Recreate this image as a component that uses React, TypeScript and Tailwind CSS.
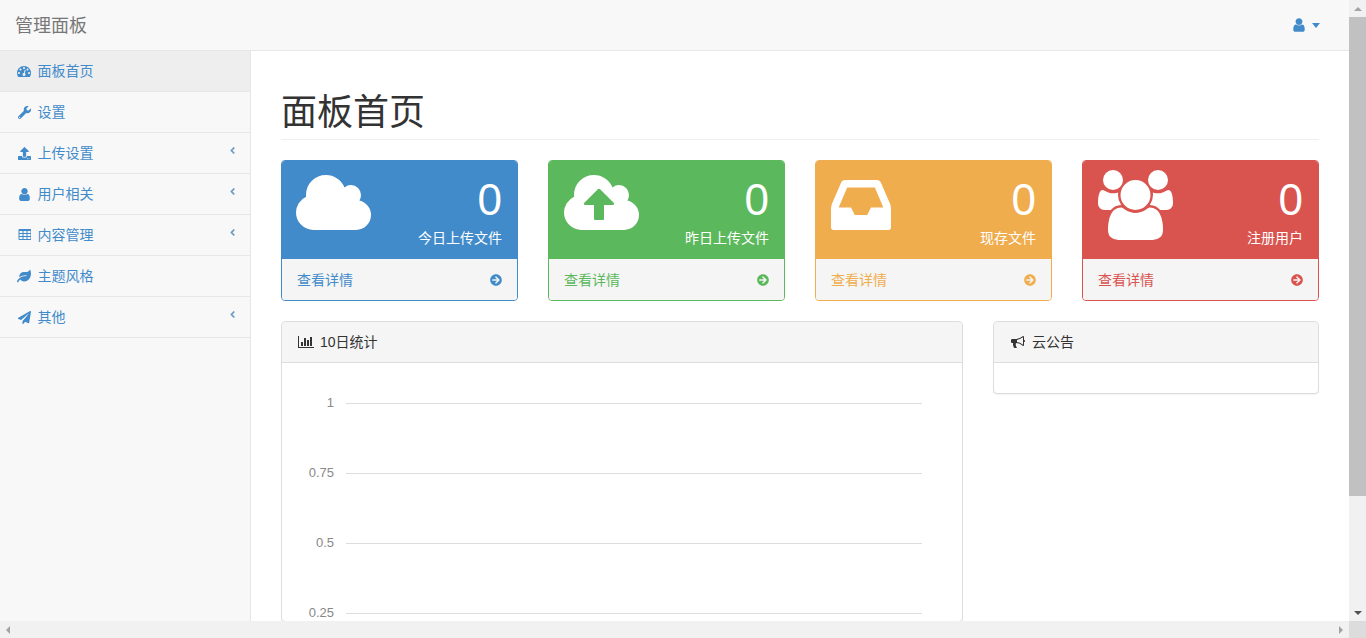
import type { ReactNode } from "react";
import { FaAngleLeft, FaArrowCircleRight, FaLeaf, FaPaperPlane, FaUpload, FaWrench } from "react-icons/fa";

const CLOUD =
  "M1920 1152q0 159-112.5 271.5t-271.5 112.5h-1088q-185 0-316.5-131.5t-131.5-316.5q0-130 70-240t188-165q-2-30-2-43 0-212 150-362t362-150q156 0 285.5 87t188.5 231q71-62 166-62 106 0 181 75t75 181q0 76-41 138 130 31 213.5 135.5t83.5 238.5z";
const CLOUD_UPLOAD =
  "M1280 864q0-14-9-23l-352-352q-9-9-23-9t-23 9l-351 351q-10 12-10 24 0 14 9 23t23 9h224v352q0 13 9.5 22.5t22.5 9.5h192q13 0 22.5-9.5t9.5-22.5v-352h224q13 0 22.5-9.5t9.5-22.5zm640 288q0 159-112.5 271.5t-271.5 112.5h-1088q-185 0-316.5-131.5t-131.5-316.5q0-130 70-240t188-165q-2-30-2-43 0-212 150-362t362-150q156 0 285.5 87t188.5 231q71-62 166-62 106 0 181 75t75 181q0 76-41 138 130 31 213.5 135.5t83.5 238.5z";
const INBOX =
  "M1023 960h316q-1-3-2.5-8t-2.5-8l-212-496h-708l-212 496q-1 2-2.5 8t-2.5 8h316l95 192h320zm513 30v482q0 26-19 45t-45 19h-1408q-26 0-45-19t-19-45v-482q0-62 25-123l238-552q10-25 36.5-42t52.5-17h832q26 0 52.5 17t36.5 42l238 552q25 61 25 123z";
const USERS =
  "M593 896q-162 5-265 128h-134q-82 0-138-40.5t-56-118.5q0-353 124-353 6 0 43.5 21t97.5 42.5 119 21.5q67 0 133-23-5 37-5 66 0 139 81 256zm1071 637q0 120-73 189.5t-194 69.5h-874q-121 0-194-69.5t-73-189.5q0-53 3.5-103.5t14-109 26.5-108.5 43-97.5 62-81 85.5-53.5 111.5-20q10 0 43 21.5t73 48 107 48 135 21.5 135-21.5 107-48 73-48 43-21.5q61 0 111.5 20t85.5 53.5 62 81 43 97.5 26.5 108.5 14 109 3.5 103.5zm-1024-1277q0 106-75 181t-181 75-181-75-75-181 75-181 181-75 181 75 75 181zm704 384q0 159-112.5 271.5t-271.5 112.5-271.5-112.5-112.5-271.5 112.5-271.5 271.5-112.5 271.5 112.5 112.5 271.5zm576 225q0 78-56 118.5t-138 40.5h-134q-103-123-265-128 81-117 81-256 0-29-5-66 66 23 133 23 59 0 119-21.5t97.5-42.5 43.5-21q124 0 124 353zm-128-609q0 106-75 181t-181 75-181-75-75-181 75-181 181-75 181 75 75 181z";
const DASHBOARD =
  "M384 1152q0-53-37.5-90.5t-90.5-37.5-90.5 37.5-37.5 90.5 37.5 90.5 90.5 37.5 90.5-37.5 37.5-90.5zm192-448q0-53-37.5-90.5t-90.5-37.5-90.5 37.5-37.5 90.5 37.5 90.5 90.5 37.5 90.5-37.5 37.5-90.5zm428 481l101-382q6-26-7.5-48.5t-38.5-29.5-48 6.5-30 39.5l-101 382q-60 5-107 43.5t-63 98.5q-20 77 20 146t117 89 146-20 89-117q16-60-6-117t-72-91zm660-33q0-53-37.5-90.5t-90.5-37.5-90.5 37.5-37.5 90.5 37.5 90.5 90.5 37.5 90.5-37.5 37.5-90.5zm-640-640q0-53-37.5-90.5t-90.5-37.5-90.5 37.5-37.5 90.5 37.5 90.5 90.5 37.5 90.5-37.5 37.5-90.5zm448 192q0-53-37.5-90.5t-90.5-37.5-90.5 37.5-37.5 90.5 37.5 90.5 90.5 37.5 90.5-37.5 37.5-90.5zm320 448q0 261-141 483-19 29-54 29h-1402q-35 0-54-29-141-221-141-483 0-182 71-348t191-286 286-191 348-71 348 71 286 191 191 286 71 348z";
const USER =
  "M1536 1399q0 109-62.5 187t-150.5 78h-854q-88 0-150.5-78t-62.5-187q0-85 8.5-160.5t31.5-152 58.5-131 94-89 134.5-34.5q131 128 313 128t313-128q76 0 134.5 34.5t94 89 58.5 131 31.5 152 8.5 160.5zm-256-887q0 159-112.5 271.5t-271.5 112.5-271.5-112.5-112.5-271.5 112.5-271.5 271.5-112.5 271.5 112.5 112.5 271.5z";
const TABLE =
  "M576 1376v-192q0-14-9-23t-23-9h-320q-14 0-23 9t-9 23v192q0 14 9 23t23 9h320q14 0 23-9t9-23zm0-384v-192q0-14-9-23t-23-9h-320q-14 0-23 9t-9 23v192q0 14 9 23t23 9h320q14 0 23-9t9-23zm512 384v-192q0-14-9-23t-23-9h-320q-14 0-23 9t-9 23v192q0 14 9 23t23 9h320q14 0 23-9t9-23zm-512-768v-192q0-14-9-23t-23-9h-320q-14 0-23 9t-9 23v192q0 14 9 23t23 9h320q14 0 23-9t9-23zm512 384v-192q0-14-9-23t-23-9h-320q-14 0-23 9t-9 23v192q0 14 9 23t23 9h320q14 0 23-9t9-23zm512 384v-192q0-14-9-23t-23-9h-320q-14 0-23 9t-9 23v192q0 14 9 23t23 9h320q14 0 23-9t9-23zm-512-768v-192q0-14-9-23t-23-9h-320q-14 0-23 9t-9 23v192q0 14 9 23t23 9h320q14 0 23-9t9-23zm512 384v-192q0-14-9-23t-23-9h-320q-14 0-23 9t-9 23v192q0 14 9 23t23 9h320q14 0 23-9t9-23zm0-384v-192q0-14-9-23t-23-9h-320q-14 0-23 9t-9 23v192q0 14 9 23t23 9h320q14 0 23-9t9-23zm128-320v1088q0 66-47 113t-113 47h-1344q-66 0-113-47t-47-113v-1088q0-66 47-113t113-47h1344q66 0 113 47t47 113z";
const BAR_CHART =
  "M640 896v512h-256v-512h256zm384-512v1024h-256v-1024h256zm1024 1152v128h-2048v-1536h128v1408h1920zm-640-896v768h-256v-768h256zm384-384v1152h-256v-1152h256z";
const BULLHORN =
  "M1664 640q53 0 90.5 37.5t37.5 90.5-37.5 90.5-90.5 37.5v384q0 52-38 90t-90 38q-417-347-812-380-58 19-91 66t-31 100.5 40 92.5q-20 33-23 65.5t6 58 33.5 55 48 50 61.5 50.5q-29 58-111.5 83t-168.5 11.5-132-55.5q-7-23-29.5-87.5t-32-94.5-23-89-15-101 3.5-98.5 22-110.5h-122q-66 0-113-47t-47-113v-192q0-66 47-113t113-47h480q435 0 896-384 52 0 90 38t38 90v384zm-128 604v-954q-394 302-768 343v270q377 42 768 341z";

function FaPath({ d, w, className }: { d: string; w: number; className?: string }) {
  return (
    <svg viewBox={`0 0 ${w} 1792`} className={className} fill="currentColor" aria-hidden="true">
      <path d={d} />
    </svg>
  );
}

interface NavItem {
  label: string;
  icon: ReactNode;
  sub?: boolean;
  active?: boolean;
}

const navItems: NavItem[] = [
  { label: "面板首页", icon: <FaPath d={DASHBOARD} w={1792} className="size-[14px]" />, active: true },
  { label: "设置", icon: <FaWrench className="ml-[1px] size-[13px]" /> },
  { label: "上传设置", icon: <FaUpload className="ml-[1px] size-[13px]" />, sub: true },
  { label: "用户相关", icon: <FaPath d={USER} w={1792} className="size-[15px]" />, sub: true },
  { label: "内容管理", icon: <FaPath d={TABLE} w={1664} className="ml-[1px] h-[14px] w-[13px]" />, sub: true },
  { label: "主题风格", icon: <FaLeaf className="size-[14px]" /> },
  { label: "其他", icon: <FaPaperPlane className="ml-[1px] size-[13px]" />, sub: true },
];

const stats = [
  {
    label: "今日上传文件",
    icon: <FaPath d={CLOUD} w={1920} className="ml-[-1px] h-[70px] w-[75px]" />,
    head: "bg-[#428bca]",
    foot: "text-[#428bca]",
    border: "border-[#428bca]",
  },
  {
    label: "昨日上传文件",
    icon: <FaPath d={CLOUD_UPLOAD} w={1920} className="h-[70px] w-[75px]" />,
    head: "bg-[#5cb85c]",
    foot: "text-[#5cb85c]",
    border: "border-[#5cb85c]",
  },
  {
    label: "现存文件",
    icon: <FaPath d={INBOX} w={1536} className="h-[70px] w-[60px]" />,
    head: "bg-[#f0ad4e]",
    foot: "text-[#f0ad4e]",
    border: "border-[#f0ad4e]",
  },
  {
    label: "注册用户",
    icon: <FaPath d={USERS} w={1920} className="h-[70px] w-[75px]" />,
    head: "bg-[#d9534f]",
    foot: "text-[#d9534f]",
    border: "border-[#d9534f]",
  },
];

const ticks = [
  { label: "1", y: 40.5 },
  { label: "0.75", y: 110.5 },
  { label: "0.5", y: 180.5 },
  { label: "0.25", y: 250.5 },
];

function Sidebar() {
  return (
    <aside className="w-[251px] shrink-0 border-r border-[#e7e7e7] bg-[#f8f8f8]">
      <ul>
        {navItems.map((item) => (
          <li
            key={item.label}
            className={`flex h-[41px] items-center border-b border-[#e7e7e7] pl-[17px] pr-[12px] text-[14px] text-[#428bca] ${
              item.active ? "bg-[#eeeeee]" : ""
            }`}
          >
            <span className="flex w-[20.5px] shrink-0 items-center">{item.icon}</span>
            <span className="flex-1">{item.label}</span>
            {item.sub && <FaAngleLeft className="mb-[5px] size-[11px] text-[#6d9cc7]" />}
          </li>
        ))}
      </ul>
    </aside>
  );
}

function StatCard({ stat }: { stat: (typeof stats)[number] }) {
  return (
    <div className={`h-[141px] overflow-hidden rounded-[4px] border ${stat.border}`}>
      <div className={`flex h-[98px] justify-between px-[15px] pt-[9px] text-white ${stat.head}`}>
        {stat.icon}
        <div className="text-right">
          <div className="mt-[8px] text-[44px] leading-[44px]">0</div>
          <div className="mt-[6px] text-[14px] leading-[20px]">{stat.label}</div>
        </div>
      </div>
      <div className={`flex h-[41px] items-center justify-between bg-[#f5f5f5] px-[15px] pt-[1px] text-[14px] ${stat.foot}`}>
        <span>查看详情</span>
        <FaArrowCircleRight className="size-[12px]" />
      </div>
    </div>
  );
}

function Chart() {
  return (
    <svg className="block h-[258px] w-full" viewBox="0 0 680 258">
      {ticks.map((t) => (
        <g key={t.label}>
          <line x1="64" x2="640" y1={t.y} y2={t.y} stroke="#dddddd" />
          <text x="52" y={t.y + 3.5} textAnchor="end" fontSize="13" fill="#888888">
            {t.label}
          </text>
        </g>
      ))}
    </svg>
  );
}

function Panel({ title, icon, children, className }: { title: string; icon: ReactNode; children: ReactNode; className: string }) {
  return (
    <div className={`rounded-[4px] border border-[#dddddd] bg-white shadow-[0_1px_1px_rgba(0,0,0,0.05)] ${className}`}>
      <div className="flex h-[41px] items-center gap-[6px] rounded-t-[4px] border-b border-[#dddddd] bg-[#f5f5f5] px-[16px] text-[14px] text-[#333333]">
        {icon}
        <span>{title}</span>
      </div>
      {children}
    </div>
  );
}

function Scrollbars() {
  return (
    <div className="flex w-[17px] shrink-0 flex-col items-center bg-[#f1f1f1]">
      <div className="flex h-[17px] items-center">
        <div className="h-0 w-0 border-x-[4px] border-b-[4px] border-x-transparent border-b-[#a3a3a3]" />
      </div>
      <div className="h-[479px] w-full bg-[#c1c1c1]" />
      <div className="mt-auto flex h-[17px] items-center">
        <div className="h-0 w-0 border-x-[4px] border-t-[4px] border-x-transparent border-t-[#505050]" />
      </div>
    </div>
  );
}

export default function App() {
  return (
    <div className="flex h-[638px] w-[1366px] flex-col overflow-hidden bg-white font-['Liberation_Sans','Noto_Sans_CJK_SC',sans-serif] text-[#333333]">
      <div className="flex min-h-0 flex-1">
        <div className="flex w-[1349px] shrink-0 flex-col overflow-hidden">
          <header className="flex h-[51px] shrink-0 items-center justify-between border-b border-[#e7e7e7] bg-[#f8f8f8] pl-[15px] pr-[29px]">
            <span className="mt-[3px] text-[18px] text-[#777777]">管理面板</span>
            <span className="flex items-center text-[#428bca]">
              <FaPath d={USER} w={1792} className="size-[16px]" />
              <span className="ml-[5px] h-0 w-0 border-x-[4.5px] border-t-[5px] border-x-transparent border-t-[#428bca]" />
            </span>
          </header>
          <div className="flex min-h-0 flex-1">
            <Sidebar />
            <main className="min-w-0 flex-1 px-[30px]">
              <div className="mt-[40px] h-[49px] border-b border-[#eeeeee] pt-[2px]">
                <h1 className="text-[36px] leading-[40px]">面板首页</h1>
              </div>
              <div className="mt-[20px] grid grid-cols-4 gap-[30px]">
                {stats.map((stat) => (
                  <StatCard key={stat.label} stat={stat} />
                ))}
              </div>
              <div className="mt-[20px] flex items-start gap-[30px]">
                <Panel
                  title="10日统计"
                  className="w-[682px] shrink-0"
                  icon={<FaPath d={BAR_CHART} w={2048} className="h-[14px] w-[16px]" />}
                >
                  <Chart />
                </Panel>
                <Panel
                  title="云公告"
                  className="flex-1"
                  icon={<FaPath d={BULLHORN} w={1792} className="ml-[1px] mr-[1px] size-[14px]" />}
                >
                  <div className="h-[30px]" />
                </Panel>
              </div>
            </main>
          </div>
        </div>
        <Scrollbars />
      </div>
      <div className="flex h-[17px] shrink-0 items-center justify-between bg-[#f1f1f1]">
        <div className="ml-[6px] h-0 w-0 border-y-[4px] border-r-[4px] border-y-transparent border-r-[#a3a3a3]" />
        <div className="flex items-center">
          <div className="mr-[6px] h-0 w-0 border-y-[4px] border-l-[4px] border-y-transparent border-l-[#a3a3a3]" />
          <div className="h-[17px] w-[17px] bg-[#dcdcdc]" />
        </div>
      </div>
    </div>
  );
}
